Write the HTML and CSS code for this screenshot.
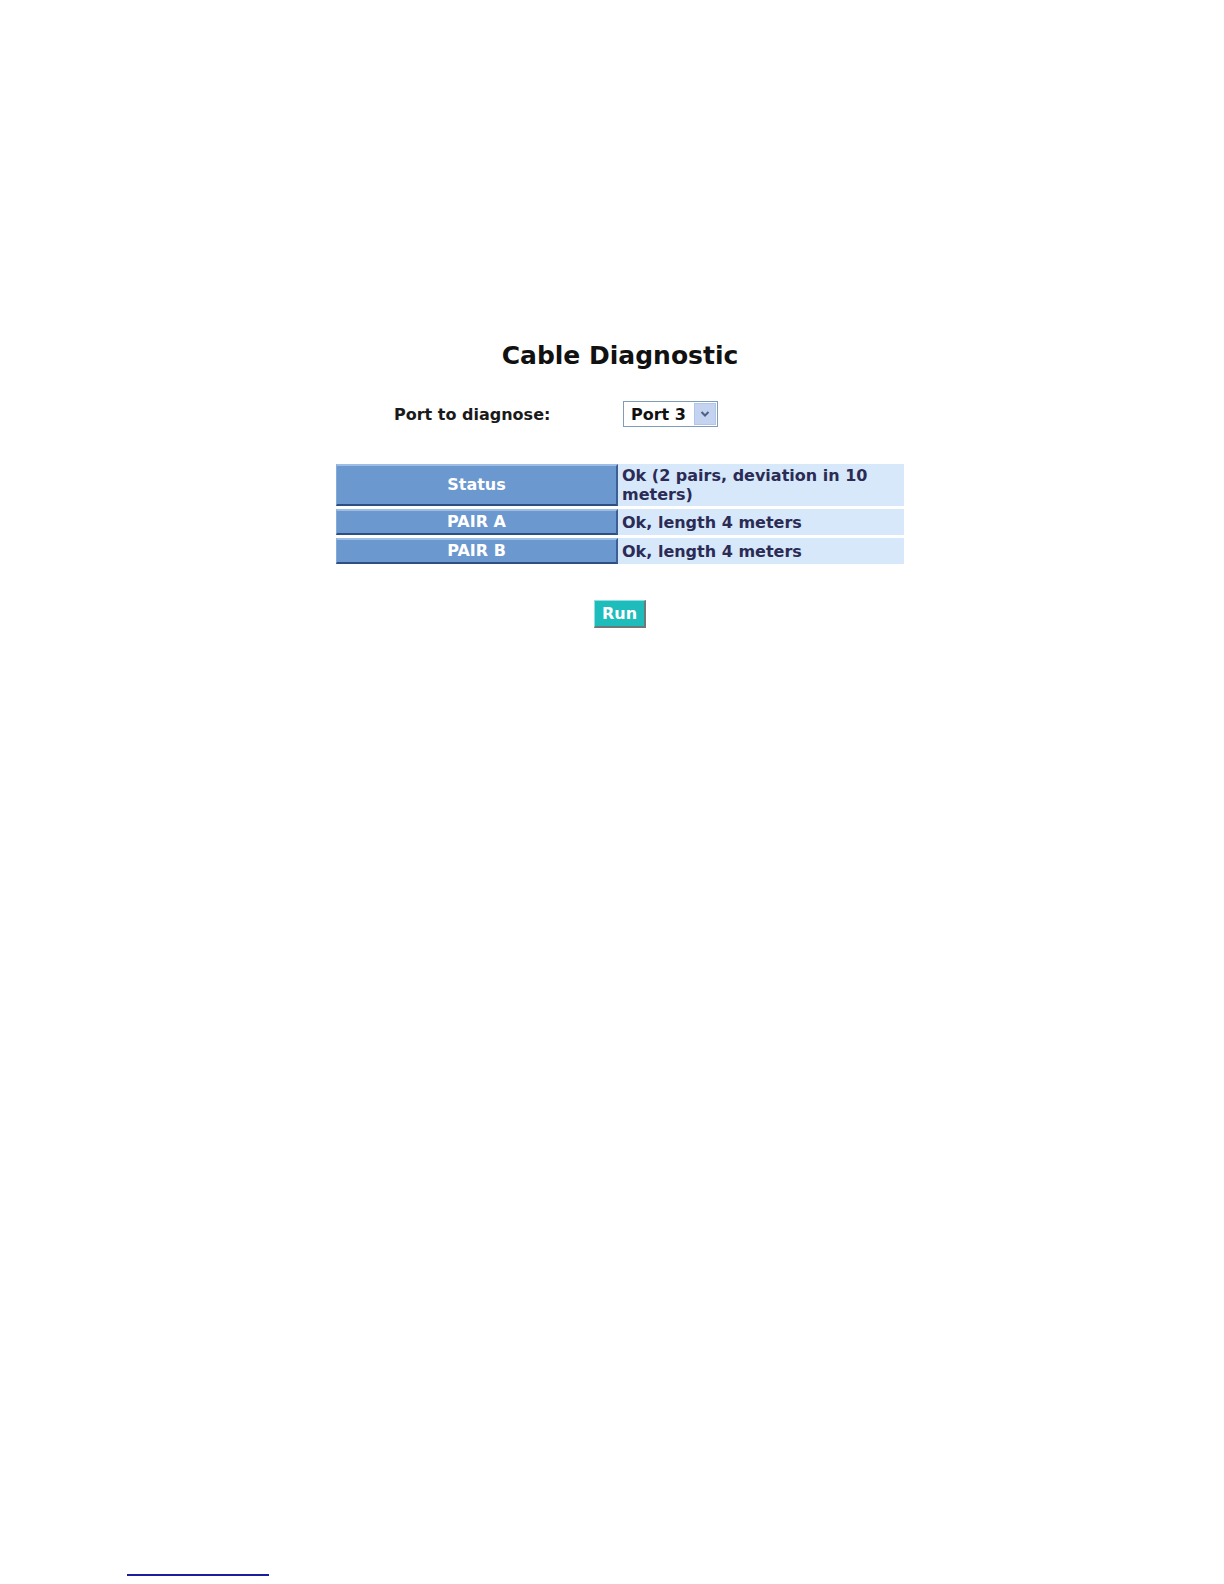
FILE: index.html
```html
<!DOCTYPE html>
<html>
<head>
<meta charset="utf-8">
<title>Cable Diagnostic</title>
<link rel="stylesheet" href="styles.css">
</head>
<body>
<div class="page">
  <h1 class="title">Cable Diagnostic</h1>
  <div class="port-row">
    <div class="port-label">Port to diagnose:</div>
    <div class="port-field">
      <div class="select">
        <span class="select-text">Port 3</span>
        <span class="select-btn">
          <svg width="10" height="8" viewBox="0 0 10 8"><path d="M1.5 2 L5 5.5 L8.5 2" fill="none" stroke="#4d6185" stroke-width="2"/></svg>
        </span>
      </div>
    </div>
  </div>
  <table class="diag">
    <tr class="tall">
      <th>Status</th>
      <td>Ok (2 pairs, deviation in 10 meters)</td>
    </tr>
    <tr>
      <th>PAIR A</th>
      <td>Ok, length 4 meters</td>
    </tr>
    <tr>
      <th>PAIR B</th>
      <td>Ok, length 4 meters</td>
    </tr>
  </table>
  <div class="actions">
    <button class="run" type="button">Run</button>
  </div>
</div>
<div class="footnote-rule"></div>
</body>
</html>
```
FILE: styles.css
```css
html, body {
  margin: 0;
  padding: 0;
  background: #ffffff;
}
html {
  overflow: hidden;
}
body {
  font-family: "DejaVu Sans", Verdana, sans-serif;
  color: #111111;
  height: 1584px;
  display: flex;
  flex-direction: column;
  overflow: hidden;
}
.page {
  flex: 1;
  display: flex;
  flex-direction: column;
  align-items: center;
  padding-top: 340px;
  padding-left: 16px;
}
.title {
  margin: 0;
  font-size: 25px;
  font-weight: bold;
  line-height: 32px;
  color: #111111;
}
.port-row {
  display: grid;
  grid-template-columns: 287px 281px;
  width: 568px;
  margin-top: 29px;
  align-items: center;
}
.port-label {
  padding-left: 58px;
  font-size: 16px;
  font-weight: bold;
  color: #1a1a1a;
}
.select {
  display: inline-flex;
  align-items: stretch;
  height: 24px;
  border: 1px solid #7f9db9;
  background: #ffffff;
}
.select-text {
  display: flex;
  align-items: center;
  padding: 0 7px 0 7px;
  font-size: 16px;
  font-weight: bold;
  color: #111111;
}
.select-btn {
  display: flex;
  align-items: center;
  justify-content: center;
  width: 20px;
  margin: 1px;
  background: #c4d3f0;
  border: 1px solid #b3c5e8;
}
.diag {
  margin-top: 34px;
  width: 568px;
  border-collapse: separate;
  border-spacing: 0 3px;
}
.diag th {
  width: 279px;
  background: #6b98cf;
  color: #ffffff;
  font-size: 16px;
  font-weight: bold;
  text-align: center;
  padding: 0;
  height: 22px;
  line-height: 20px;
  border-top: 2px solid #9dbde4;
  border-left: 1px solid #86abd9;
  border-bottom: 2px solid #2f4f82;
  border-right: 2px solid #3d5f92;
}
.diag td {
  background: #d7e8fb;
  color: #2b2b55;
  font-size: 16px;
  font-weight: bold;
  text-align: left;
  padding: 0 8px 0 4px;
  line-height: 19px;
  vertical-align: middle;
}
.diag tr.tall th {
  height: 38px;
}
.actions {
  margin-top: 33px;
  display: flex;
  justify-content: center;
}
.run {
  font-family: "DejaVu Sans", Verdana, sans-serif;
  font-size: 16px;
  font-weight: bold;
  color: #ffffff;
  background: #1fbcbc;
  border-top: 1px solid #8fe0e0;
  border-left: 1px solid #8fe0e0;
  border-right: 2px solid #6e7a7a;
  border-bottom: 2px solid #6e7a7a;
  padding: 0 7px;
  height: 28px;
  line-height: 24px;
  cursor: pointer;
}
.footnote-rule {
  flex: none;
  margin: 0 0 8px 127px;
  width: 142px;
  height: 0;
  border-top: 2px solid #1c1c9c;
}
```
